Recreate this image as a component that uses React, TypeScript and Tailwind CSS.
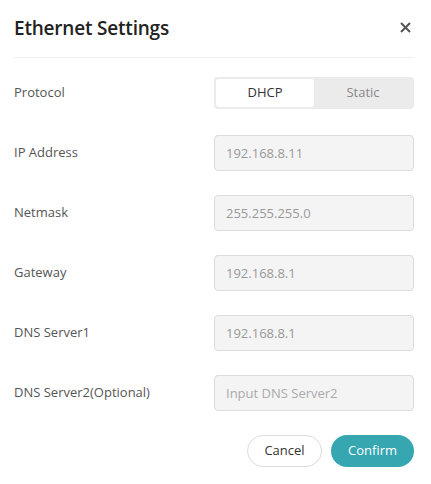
import { useState } from "react"

const fields = [
  { label: "IP Address", value: "192.168.8.11" },
  { label: "Netmask", value: "255.255.255.0" },
  { label: "Gateway", value: "192.168.8.1" },
  { label: "DNS Server1", value: "192.168.8.1" },
  { label: "DNS Server2(Optional)", value: "", placeholder: "Input DNS Server2" },
]

export default function App() {
  const [protocol, setProtocol] = useState<"dhcp" | "static">("dhcp")

  return (
    <div
      className="w-[431px] h-[484px] bg-white pl-[14px] pr-[17px] text-[#333]"
      style={{ fontFamily: '"Open Sans", "Noto Sans", sans-serif' }}
    >
      {/* header */}
      <div className="flex items-center justify-between h-[58px] border-b border-[#eeeeee]">
        <h2 className="text-[19px] font-semibold text-[#222] leading-none tracking-[-0.2px]">Ethernet Settings</h2>
        <button className="w-[16px] h-[16px] flex items-center justify-center mr-[1px] mb-[2px] text-[#555]">
          <svg width="11" height="11" viewBox="0 0 11 11" fill="none" stroke="currentColor" strokeWidth="2">
            <path d="M1 1l9 9M10 1l-9 9" />
          </svg>
        </button>
      </div>

      {/* form */}
      <div className="flex flex-col pt-[19px]">
        <div className="flex items-center justify-between h-[32px]">
          <span className="text-[13px] text-[#555]">Protocol</span>
          <div className="w-[200px] h-[32px] bg-[#ebebeb] rounded-[4px] p-[2px] flex">
            <button
              onClick={() => setProtocol("dhcp")}
              className={
                protocol === "dhcp"
                  ? "flex-1 rounded-[3px] bg-white text-[13px] text-[#333]"
                  : "flex-1 rounded-[3px] text-[13px] text-[#888]"
              }
            >
              DHCP
            </button>
            <button
              onClick={() => setProtocol("static")}
              className={
                protocol === "static"
                  ? "flex-1 rounded-[3px] bg-white text-[13px] text-[#333]"
                  : "flex-1 rounded-[3px] text-[13px] text-[#888]"
              }
            >
              Static
            </button>
          </div>
        </div>

        {fields.map((f, i) => (
          <div
            key={f.label}
            className={
              i === 0
                ? "flex items-center justify-between h-[36px] mt-[26px]"
                : "flex items-center justify-between h-[36px] mt-[24px]"
            }
          >
            <span className="text-[13px] text-[#555]">{f.label}</span>
            <input
              readOnly
              value={f.value}
              placeholder={f.placeholder}
              className="w-[200px] h-[36px] bg-[#f4f4f4] border border-[#dcdcdc] rounded-[4px] px-[11px] text-[13px] text-[#999] placeholder:text-[#aaa] outline-none"
            />
          </div>
        ))}
      </div>

      {/* footer */}
      <div className="flex justify-end gap-[9px] mt-[24px]">
        <button className="w-[75px] h-[32px] rounded-full border border-[#dcdcdc] bg-white text-[13px] text-[#333]">
          Cancel
        </button>
        <button className="w-[83px] h-[32px] rounded-full bg-[#36a6b1] text-[13px] font-medium text-white">
          Confirm
        </button>
      </div>
    </div>
  )
}
